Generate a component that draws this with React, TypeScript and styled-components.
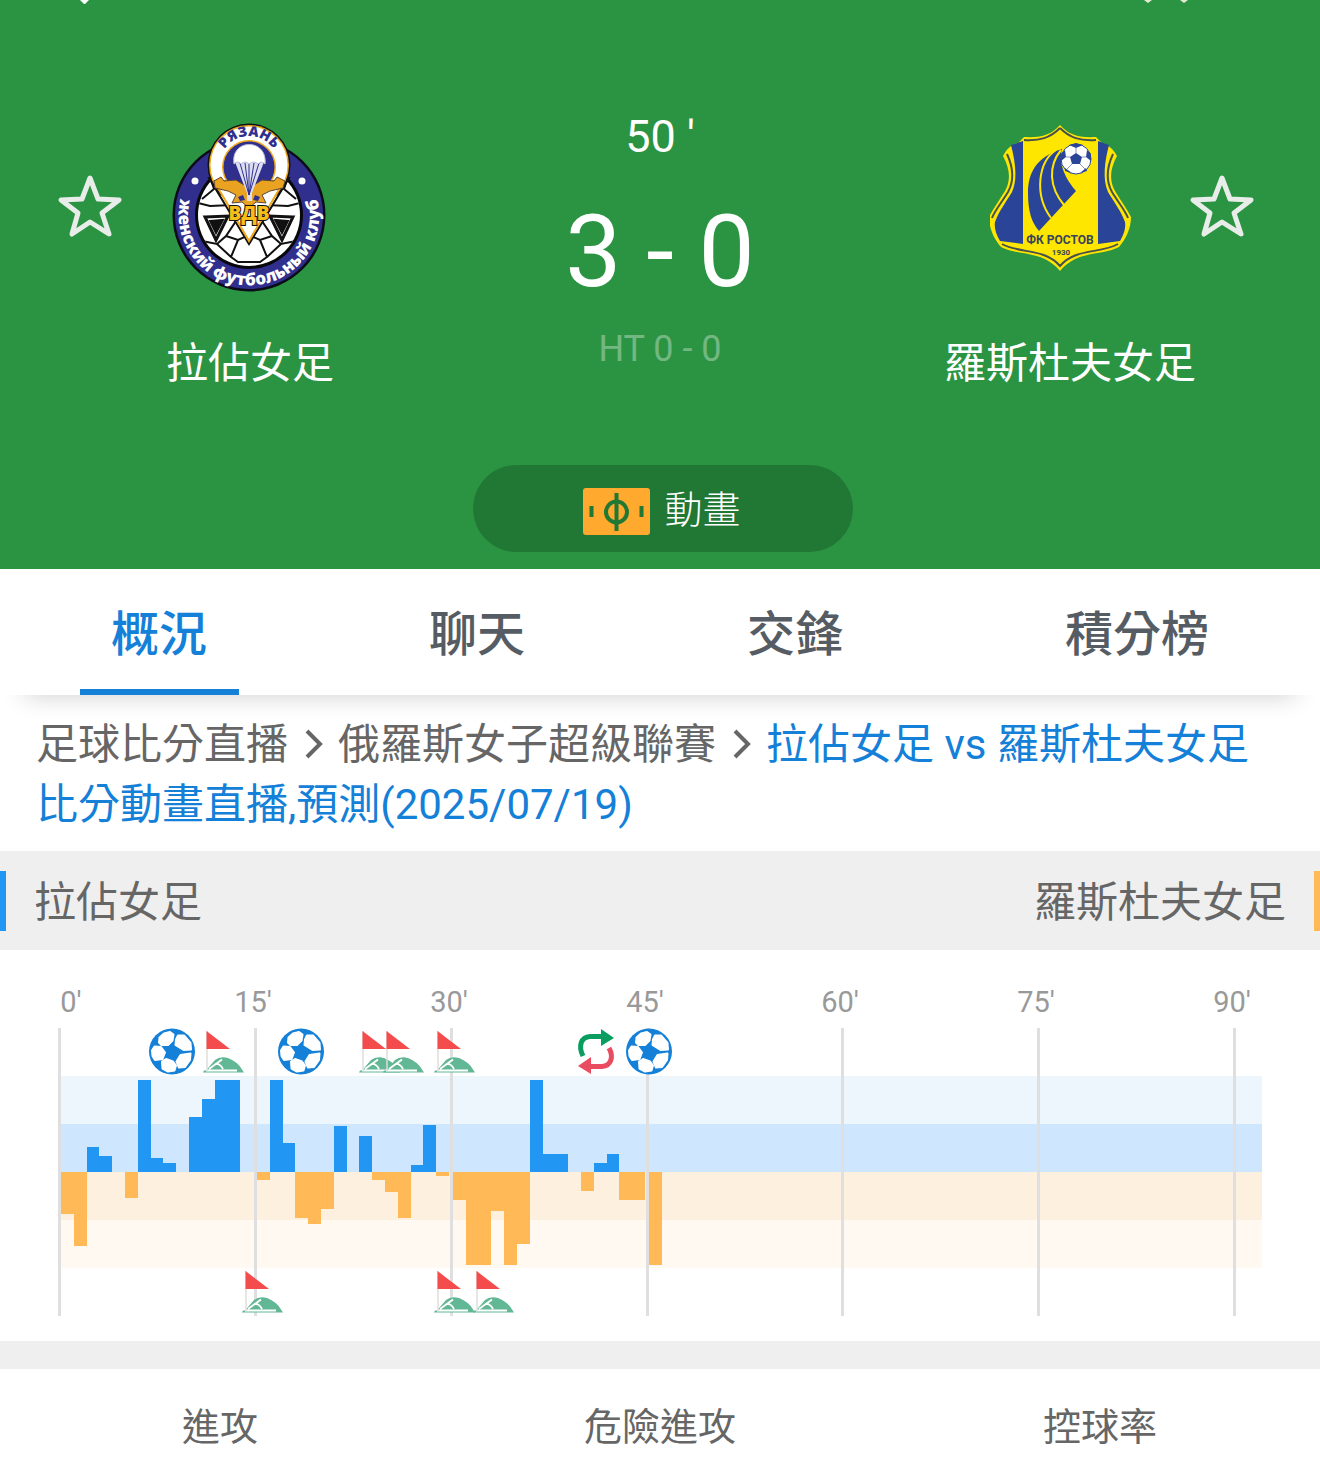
import React from "react";
import styled, { createGlobalStyle } from "styled-components";

const GlobalStyle = createGlobalStyle`
  * { box-sizing: border-box; }
  body {
    margin: 0;
    background: #fff;
    color: #666;
    font-family: Roboto, "Noto Sans CJK TC", sans-serif;
  }
  button { font-family: inherit; border: 0; background: none; padding: 0; cursor: pointer; }
  a { color: inherit; text-decoration: none; }
`;

const Header = styled.header`
  background: #2b9443;
  color: #fff;
  padding-bottom: 17px;
`;
const NavBar = styled.div`
  display: flex;
  justify-content: space-between;
  height: 4px;
  padding: 0 132px 0 78px;
  margin-bottom: 103px;
`;
const Match = styled.div`
  display: grid;
  grid-template-columns: minmax(0, 1fr) 320px minmax(0, 1fr);
  margin-bottom: 71px;
`;
const Team = styled.div`
  display: grid;
  grid-template-columns: 1fr 160px 1fr;
  grid-template-rows: 170px 60px;
  row-gap: 41px;
  padding-top: 16px;
  justify-items: center;
  align-items: center;
`;
const Crest = styled.div`
  grid-column: 2;
  grid-row: 1;
  svg { display: block; }
`;
const Star = styled.button<{ $right?: boolean }>`
  grid-column: ${(p) => (p.$right ? 3 : 1)};
  grid-row: 1;
  justify-self: ${(p) => (p.$right ? "end" : "start")};
  padding: ${(p) => (p.$right ? "0 64px 0 0" : "0 0 0 56px")};
  svg { display: block; }
`;
const TeamName = styled.div`
  grid-column: 1 / -1;
  grid-row: 2;
  font-size: 42px;
  line-height: 60px;
`;
const Score = styled.div`
  display: flex;
  flex-direction: column;
  align-items: center;
`;
const Minute = styled.div`
  font-size: 45px;
  line-height: 60px;
`;
const Goals = styled.div`
  font-size: 100px;
  line-height: 120px;
  margin: 25px 0 7px;
`;
const HalfTime = styled.div`
  font-size: 36px;
  line-height: 60px;
  color: rgba(255, 255, 255, 0.35);
`;
const Actions = styled.div`
  display: flex;
  justify-content: center;
  padding-left: 6px;
`;
const Animation = styled.button`
  display: flex;
  align-items: center;
  justify-content: center;
  gap: 14px;
  width: 380px;
  height: 87px;
  padding: 0 2px 4px 0;
  border-radius: 44px;
  background: #217734;
  color: #fff;
  font-size: 38px;
  font-weight: 300;
  svg { margin-top: 10px; }
`;

const Tabs = styled.nav`
  display: flex;
  position: relative;
  background: #fff;
  box-shadow: 0 24px 24px -24px rgba(0, 0, 0, 0.2);
`;
const Tab = styled.a<{ $active?: boolean }>`
  flex: 1 1 auto;
  display: flex;
  flex-direction: column;
  align-items: center;
  font-size: 48px;
  font-weight: 500;
  line-height: 72px;
  padding-top: 30px;
  height: 126px;
  color: ${(p) => (p.$active ? "#1480d8" : "#555c63")};
  &::after {
    content: "";
    width: 50%;
    height: 6px;
    margin-top: auto;
    background: ${(p) => (p.$active ? "#1480d8" : "transparent")};
  }
`;

const Crumbs = styled.nav`
  padding: 20px 36px 16px;
  font-size: 42px;
  line-height: 60px;
  svg { margin: 0 13px 0 15px; }
`;
const Current = styled.a`
  color: #1480d8;
`;

const TeamsBar = styled.div`
  display: flex;
  align-items: center;
  justify-content: space-between;
  height: 99px;
  background: #efefef;
  font-size: 42px;
  line-height: 56px;
`;
const Side = styled.div<{ $away?: boolean }>`
  padding: 4px 28px 0;
  border: 0 solid ${(p) => (p.$away ? "#ffb957" : "#2196f3")};
  border-width: ${(p) => (p.$away ? "0 6px 0 0" : "0 0 0 6px")};
`;
const Chart = styled.svg`
  display: block;
  width: 100%;
  height: auto;
`;
const AxisLabel = styled.text`
  font-size: 29px;
  fill: #999;
  text-anchor: middle;
`;
const Divider = styled.div`
  height: 28px;
  background: #efefef;
`;
const Stats = styled.div`
  display: grid;
  grid-template-columns: repeat(3, 1fr);
  padding-top: 28px;
  font-size: 38px;
  line-height: 60px;
  text-align: center;
`;

const StarIcon = () => (
  <svg width="68" height="68" viewBox="0 1 68 68" fill="none" stroke="#e9ede9" strokeWidth="5" strokeLinejoin="round">
    <path d="M34 5 L42 26 L63 27 L46 40 L53 61 L34 49 L16 61 L22 40 L5 27 L26 26 Z" />
  </svg>
);

const RyazanCrest = () => (
  <svg width="156" height="170" viewBox="0 0 156 170" fontFamily="Open Sans, sans-serif" fontWeight="800">
    <defs>
      <path id="ry-top" d="M48 48 A29.500 29.500 0 1 1 106 48" />
      <path id="ry-club" d="M11 68 A70.300 70.300 0 1 0 143 68" />
      <clipPath id="ry-ball"><circle cx="77" cy="92" r="51" /></clipPath>
    </defs>
    <circle cx="77" cy="92" r="76.500" fill="#0c0c18" />
    <circle cx="77" cy="92" r="74" fill="#302f8e" />
    <circle cx="77" cy="92" r="54" fill="#08080c" />
    <circle cx="77" cy="92" r="51" fill="#fff" />
    <g clipPath="url(#ry-ball)" fill="none" stroke="#111" strokeWidth="2">
      <path d="M26 80 L38 83 L60 82 L64 98 L54 113 L45 121 L30 118 M128 80 L116 83 L94 82 L90 98 L100 113 L109 121 L124 118" />
      <path d="M54 113 L66 117 L77 112 L88 117 L100 113 M66 117 L59 134 L66 139 H88 L95 134 L88 117 M45 121 L59 134 M109 121 L95 134" />
      <path d="M30 76 L42 66 L38 54 M124 76 L112 66 L116 54" />
      <path d="M33 94 L56 93 L44 117 Z M121 94 L98 93 L110 117 Z" fill="#fff" strokeWidth="3" />
      <path d="M38 98 L51 97 L44 110 Z M116 98 L103 97 L110 110 Z" fill="#111" />
    </g>
    <path d="M37 55 L77 121 L117 55 Z" fill="#fff" stroke="#111" strokeWidth="2" />
    <circle cx="77" cy="42" r="41.500" fill="#111" />
    <circle cx="77" cy="42" r="40" fill="#f2a91c" />
    <circle cx="77" cy="42" r="38.500" fill="#fff" />
    <path d="M42 58 H112 L77 118 Z" fill="#fff" stroke="#f2a91c" strokeWidth="2" />
    <circle cx="77" cy="44" r="27" fill="#f2a91c" />
    <circle cx="77" cy="44" r="25.500" fill="#302f8e" />
    <path d="M42 58 L49 54 L52 58 L64 57 L72 62 H82 L90 57 L102 58 L105 54 L113 58 L111 65 L98 68 L90 72 L94 80 L84 79 L77 85 L70 79 L60 80 L64 72 L56 68 L43 65 Z" fill="#e9a321" stroke="#5a4638" strokeWidth="1" />
    <path d="M66 74 L71 72 L73 77 L68 78 Z M88 74 L83 72 L81 77 L86 78 Z" fill="#302f8e" />
    <path d="M63 39 L75 70 V78 H80 V70 L92 39 Z" fill="#dcddf0" />
    <path d="M68 40 L77 72 L73 40 M82 40 L77 72 L87 40 M77 40 V72" fill="none" stroke="#302f8e" strokeWidth="1" />
    <path d="M62 41 C58 15 96 15 93 41 Q89 37 86 41 Q82 37 77 41 Q73 37 69 41 Q66 37 62 41 Z" fill="#fff" stroke="#bfc0df" strokeWidth="1" />
    <text x="77" y="97" fontSize="19" textAnchor="middle" fill="#f7bd18" stroke="#111" strokeWidth="2" paintOrder="stroke">ВДВ</text>
    <text fontSize="14" fill="#302f8e"><textPath href="#ry-top" startOffset="50%" textAnchor="middle">РЯЗАНЬ</textPath></text>
    <text fontSize="17" fill="#fff"><textPath href="#ry-club" startOffset="50%" textAnchor="middle">женский футбольный клуб</textPath></text>
    <circle cx="23" cy="58" r="3.500" fill="#fff" />
    <circle cx="130" cy="58" r="3.500" fill="#fff" />
  </svg>
);

const RostovCrest = () => (
  <svg width="160" height="170" viewBox="2 0 160 170" fontFamily="Roboto, sans-serif" fontWeight="700">
    <path
      d="M72 2 C64 11 55 15 36 14 L30 20 C22 22 19 26 15 33 C22 46 23 57 17 68 C11 78 5 86 1 94 C1 105 6 116 13 124 C30 133 55 127 72 148 C89 127 114 133 131 124 C138 116 143 105 143 94 C139 86 133 78 127 68 C121 57 122 46 129 33 C125 26 121 22 114 20 L108 14 C89 15 80 11 72 2 Z"
      fill="#ffe600"
    />
    <path
      d="M72 5 C62 15 52 18 36 17 M72 5 C82 15 92 18 108 17 M19 31 C26 46 26 58 20 69 C14 79 7 87 4 95 M125 31 C118 46 118 58 124 69 C130 79 137 87 140 95 M14 121 C32 131 57 125 72 143 C87 125 112 131 130 121"
      fill="none" stroke="#47504e" strokeWidth="2"
    />
    <path d="M23 22 L35 18 V121 L12 118 C8 111 6 105 7 99 C11 88 18 79 24 69 C30 56 27 37 23 22 Z" fill="#2a4597" />
    <path d="M121 22 L110 18 V121 L132 118 C136 111 138 105 137 99 C133 88 126 79 120 69 C114 56 117 37 121 22 Z" fill="#2a4597" />
    <path d="M74 26 C48 34 40 50 40 70 C40 89 44 100 51 108 L88 68 C78 56 70 42 74 26 Z" fill="#2a4597" />
    <path d="M68 27 C50 39 46 72 63 95 M73 27 C60 43 61 64 76 82" fill="none" stroke="#ffe600" strokeWidth="2" />
    <circle cx="88" cy="36" r="15" fill="#fff" stroke="#2a4597" strokeWidth="1" />
    <path d="M88 30 L94 34 L92 41 H84 L82 34 Z M81 22 L88 25 L95 22 L88 20 Z M99 27 L98 34 L103 38 V31 Z M98 45 L92 50 L99 48 Z M77 45 L84 50 L77 48 Z M77 27 L78 34 L73 38 V31 Z" fill="#2a4597" />
    <path d="M88 30 V25 M94 34 L98 34 M92 41 L97 46 M84 41 L79 46 M82 34 H78" stroke="#8a99c8" strokeWidth="1" />
    <text x="72" y="121" fontSize="12" textAnchor="middle" fill="#38445a">ФК РОСТОВ</text>
    <text x="73" y="132" fontSize="8" textAnchor="middle" fill="#38445a">1930</text>
  </svg>
);

const PitchIcon = () => (
  <svg width="67" height="47" viewBox="0 0 67 47">
    <rect width="67" height="47" rx="3" fill="#ffa92f" />
    <circle cx="33.500" cy="24" r="10.500" fill="none" stroke="#217734" strokeWidth="4" />
    <path d="M33.500 5 V43 M8.500 18 V29 M58.500 18 V29" stroke="#217734" strokeWidth="4" />
  </svg>
);

const Chevron = () => (
  <svg width="22" height="30" viewBox="0 0 22 30" fill="none" stroke="#666" strokeWidth="4">
    <path d="M4 2 L17 15 L4 28" />
  </svg>
);

const Ball = ({ x }: { x: number }) => (
  <g transform={`translate(${x} 101.500)`}>
    <circle r="23" fill="#1480d8" />
    <g fill="#fff" stroke="#fff" strokeWidth="2" strokeLinejoin="round">
      <path d="M-12.500 -14 L-8 -18 L-2 -19.500 L1.500 -17 L0.500 -11 L-4 -6.500 L-10.500 -6.500 L-13 -9 Z" />
      <path d="M4 -12 L6 -16 L12 -16 L18.500 -8.500 L19 -2 L11.500 -1.500 L3.500 -6.500 Z" />
      <path d="M8.500 3.500 L18.500 2 L18 8.500 L13 15.500 L7 16 L4.500 10 Z" />
      <path d="M-10 10 L-6 7.500 L1 10 L4 14 L2.500 19 L-4 20 L-9.500 17 Z" />
      <path d="M-20 -1 L-17.500 -5 L-11 -4.500 L-7 1 L-9.500 7.500 L-17 8.500 L-19.500 4.500 Z" />
    </g>
  </g>
);

const Corner = ({ x, y }: { x: number; y: number }) => (
  <g transform={`translate(${x} ${y})`}>
    <path d="M0 41.500 L1 39.500 H3 L12 29 Q17 25 25 27 Q35 31 39 38.500 L41 41.500 Z" fill="#62b795" />
    <path d="M6 38 L19 28.500 M12 33 Q17 32 20 38 M3 39.500 H34" fill="none" stroke="#fff" strokeWidth="1.800" />
    <path d="M4 0 V40" stroke="#e0dcdc" strokeWidth="1.500" />
    <path d="M3.500 0 L27 18 H3.500 Z" fill="#f44c4c" />
  </g>
);

const Substitution = ({ x }: { x: number }) => (
  <g transform={`translate(${x} 79)`}>
    <path d="M5 27 C0 17 3 8 12 7.500 H24" fill="none" stroke="#0a9d60" strokeWidth="5" />
    <path d="M23 0 L36 9 L23 17 Z" fill="#0a9d60" />
    <path d="M31 19 C36 28 33 37 24 37.500 H12" fill="none" stroke="#e94b61" strokeWidth="5" />
    <path d="M13 28 L0 37 L13 45 Z" fill="#e94b61" />
  </g>
);

/* Attack pressure per minute: positive for the home side, negative for the away side. */
const pressure = [
  -42, -74, 25, 16, 0, -26, 92, 14, 9, 0, 55, 73, 92, 92, 0, -8, 92, 29, -46, -52, -37, 46, 0, 36, -8, -20,
  -46, 7, 47, -4, -28, -93, -93, -39, -93, -72, 92, 18, 18, 0, -19, 9, 18, -28, -28, -93,
];
const BASE = 222;
/* Left edge of the grid line that opens each quarter of an hour. */
const gridLine = (quarter: number) => Math.round(58.2 + quarter * 195.8);
/* Fifteen bars stand between two grid lines. */
const barEdge = (quarter: number, n: number) => Math.round(gridLine(quarter) + 3 + n * 12.8);

const PressureChart = () => (
  <Chart viewBox="0 0 1320 391" role="img" aria-label="進攻走勢">
    <rect x="61" y="126" width="1201" height="48" fill="#edf6fd" />
    <rect x="61" y="174" width="1201" height="48" fill="#cfe7fe" />
    <rect x="61" y="222" width="1201" height="48" fill="#fef0df" />
    <rect x="61" y="270" width="1201" height="48" fill="#fff9f2" />
    {pressure.map((v, i) => {
      const quarter = Math.floor(i / 15);
      const left = barEdge(quarter, i % 15);
      return (
        <rect
          key={i}
          x={left}
          y={v > 0 ? BASE - v : BASE}
          width={barEdge(quarter, (i % 15) + 1) - left}
          height={Math.abs(v)}
          fill={v > 0 ? "#2196f3" : "#ffb957"}
        />
      );
    })}
    {[0, 1, 2, 3, 4, 5, 6].map((q) => (
      <React.Fragment key={q}>
        <rect x={gridLine(q)} y="78" width="3" height="288" fill="#dfdfdf" />
        <AxisLabel x={q === 0 ? 71 : gridLine(q) - 1} y="62">{q * 15}'</AxisLabel>
      </React.Fragment>
    ))}
    {[172, 301, 649].map((x) => <Ball key={x} x={x} />)}
    {[203, 359, 383, 434].map((x) => <Corner key={x} x={x} y={81} />)}
    {[242, 434, 473].map((x) => <Corner key={x} x={x} y={321} />)}
    <Substitution x={578} />
  </Chart>
);

export default function App() {
  return (
    <>
      <GlobalStyle />
      <Header>
        <NavBar>
          <svg width="14" height="4" viewBox="0 0 14 4"><path d="M2 0 H11 L7 4 H6 Z" fill="#fff" /></svg>
          <svg width="44" height="4" viewBox="0 0 44 4"><path d="M0 0 H8 L4 3 Z M36 0 H44 L40 3 Z" fill="#e6ead0" /></svg>
        </NavBar>
        <Match>
          <Team>
            <Star aria-label="收藏 拉佔女足"><StarIcon /></Star>
            <Crest><RyazanCrest /></Crest>
            <TeamName>拉佔女足</TeamName>
          </Team>
          <Score>
            <Minute>50 '</Minute>
            <Goals>3 - 0</Goals>
            <HalfTime>HT 0 - 0</HalfTime>
          </Score>
          <Team>
            <Crest><RostovCrest /></Crest>
            <Star $right aria-label="收藏 羅斯杜夫女足"><StarIcon /></Star>
            <TeamName>羅斯杜夫女足</TeamName>
          </Team>
        </Match>
        <Actions>
          <Animation><PitchIcon />動畫</Animation>
        </Actions>
      </Header>
      <Tabs>
        <Tab href="#overview" $active>概況</Tab>
        <Tab href="#chat">聊天</Tab>
        <Tab href="#h2h">交鋒</Tab>
        <Tab href="#table">積分榜</Tab>
      </Tabs>
      <Crumbs>
        <a href="#live">足球比分直播</a>
        <Chevron />
        <a href="#league">俄羅斯女子超級聯賽</a>
        <Chevron />
        <Current href="#match">拉佔女足 vs 羅斯杜夫女足比分動畫直播,預測(2025/07/19)</Current>
      </Crumbs>
      <TeamsBar>
        <Side>拉佔女足</Side>
        <Side $away>羅斯杜夫女足</Side>
      </TeamsBar>
      <PressureChart />
      <Divider />
      <Stats>
        <div>進攻</div>
        <div>危險進攻</div>
        <div>控球率</div>
      </Stats>
    </>
  );
}
